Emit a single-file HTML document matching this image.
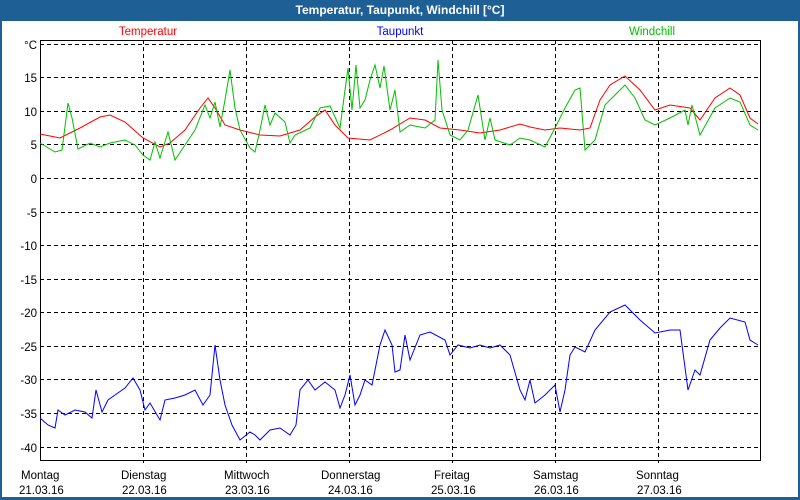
<!DOCTYPE html>
<html><head><meta charset="utf-8"><style>
body{margin:0;width:800px;height:500px;overflow:hidden;background:#fff}
svg{display:block}
text{font-family:"Liberation Sans",sans-serif;font-size:11.5px}
</style></head><body>
<svg width="800" height="500" viewBox="0 0 800 500" xmlns="http://www.w3.org/2000/svg">
<rect x="0" y="0" width="800" height="500" fill="#1e5f96"/>
<rect x="2" y="21" width="796" height="476" fill="#fff"/>
<text x="400" y="14" fill="#fff" font-weight="bold" text-anchor="middle" style="font-size:12px">Temperatur, Taupunkt, Windchill [°C]</text>
<text x="148" y="35" fill="#ff0000" text-anchor="middle">Temperatur</text>
<text x="400" y="35" fill="#0000ff" text-anchor="middle">Taupunkt</text>
<text x="652" y="35" fill="#00c000" text-anchor="middle">Windchill</text>
<g stroke="#000" stroke-dasharray="4,3" stroke-width="1" fill="none">
<path d="M40 44.5H760M40 77.5H760M40 111.5H760M40 144.5H760M40 178.5H760M40 212.5H760M40 245.5H760M40 279.5H760M40 312.5H760M40 346.5H760M40 379.5H760M40 413.5H760M40 447.5H760"/>
<path d="M143.5 40V463M246.5 40V463M349.5 40V463M452.5 40V463M555.5 40V463M658.5 40V463"/>
</g>
<rect x="40.5" y="40.5" width="720" height="420" fill="none" stroke="#000"/>
<g text-anchor="end" fill="#000">
<text x="37" y="49">°C</text><text x="37" y="82">15</text><text x="37" y="116">10</text><text x="37" y="149">5</text><text x="37" y="183">0</text><text x="37" y="217">-5</text><text x="37" y="250">-10</text><text x="37" y="284">-15</text><text x="37" y="317">-20</text><text x="37" y="351">-25</text><text x="37" y="384">-30</text><text x="37" y="418">-35</text><text x="37" y="452">-40</text>
</g>
<g fill="#000">
<text x="21" y="479">Montag</text><text x="19" y="494">21.03.16</text>
<text x="121" y="479">Dienstag</text><text x="122" y="494">22.03.16</text>
<text x="224" y="479">Mittwoch</text><text x="225" y="494">23.03.16</text>
<text x="321" y="479">Donnerstag</text><text x="328" y="494">24.03.16</text>
<text x="434" y="479">Freitag</text><text x="431" y="494">25.03.16</text>
<text x="533" y="479">Samstag</text><text x="534" y="494">26.03.16</text>
<text x="636" y="479">Sonntag</text><text x="637" y="494">27.03.16</text>
</g>
<polyline fill="none" stroke="#ff0000" points="40,134 60,138 80,128 100,117 110,115 125,122 143,138 160,147 170,143 185,130 200,108 208,98 215,108 225,125 240,130 260,135 280,136 300,130 315,117 325,110 335,125 348,138 370,140 390,130 410,118 425,120 440,128 460,130 480,133 500,130 520,124 530,127 545,130 560,128 580,130 590,128 600,100 610,85 625,76 640,90 655,110 670,105 690,108 700,120 715,98 730,88 740,95 750,118 758,124"/>
<polyline fill="none" stroke="#00c000" points="40,143 55,152 62,150 68,103 72,118 78,149 90,143 100,147 110,143 125,140 135,145 143,155 150,160 155,142 160,158 168,132 175,160 185,145 195,130 205,105 210,118 215,102 220,127 225,100 230,70 235,108 240,130 250,148 255,152 260,130 265,105 270,125 275,113 285,122 290,143 295,135 310,128 320,108 330,106 340,128 345,90 348,68 352,110 356,65 360,108 365,100 370,80 375,65 380,88 384,66 390,110 395,90 400,132 410,125 425,128 435,120 438,60 442,110 450,135 460,140 468,130 478,95 485,140 490,118 495,140 510,145 520,138 530,140 545,147 555,128 565,108 575,90 580,88 585,150 595,140 605,105 615,95 625,85 635,98 645,120 655,125 670,118 685,110 688,125 692,105 700,135 715,108 730,98 740,102 750,125 758,130"/>
<polyline fill="none" stroke="#0000ff" points="40,418 48,425 55,428 58,410 65,415 75,410 85,412 92,418 96,390 102,412 108,400 115,395 125,388 133,378 140,390 145,410 150,403 160,420 165,400 175,398 185,395 195,390 203,405 210,395 215,345 220,380 225,405 232,425 240,440 250,432 255,435 260,440 270,430 280,428 290,435 296,425 300,390 308,380 315,390 325,382 335,390 340,408 345,395 350,375 355,405 360,395 365,380 372,385 380,345 385,330 392,345 395,372 400,370 405,335 410,360 420,335 430,332 445,340 450,355 458,345 470,348 480,345 490,348 500,345 510,355 520,390 525,400 530,380 535,403 545,395 555,385 560,412 565,390 570,355 575,347 585,352 595,330 610,312 625,305 640,320 655,333 670,330 680,330 688,390 695,370 700,375 710,340 720,328 730,318 745,322 750,340 758,345"/>
</svg>
</body></html>
